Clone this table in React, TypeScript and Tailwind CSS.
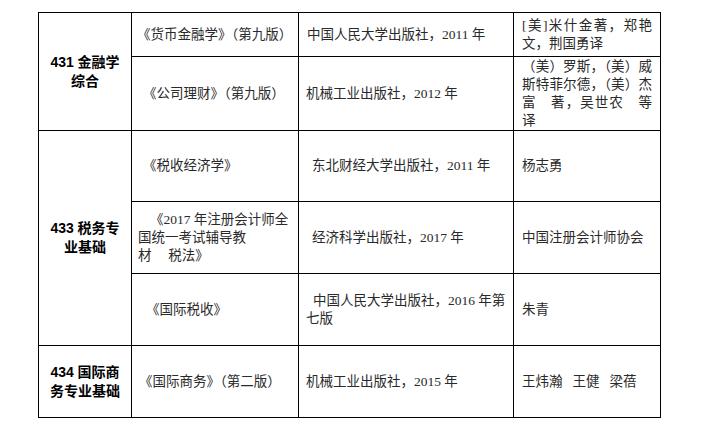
import React from "react";

const serif = "font-['Liberation_Serif','Noto_Sans_CJK_SC',serif]";
const cell = "border border-black align-middle p-0";

const JLine = ({ text }: { text: string }): JSX.Element => (
  <div className="text-justify [text-align-last:justify]">{text}</div>
);

const Subject = ({ lines }: { lines: string[] }): JSX.Element => (
  <div className="text-center font-['Liberation_Sans','Noto_Sans_CJK_SC',sans-serif] font-bold text-[14px] leading-[19px] text-black">
    {lines.map((l, i) => (
      <div key={i}>{l}</div>
    ))}
  </div>
);

const App = (): JSX.Element => {
  return (
    <div className="w-[715px] h-[423px] bg-white pt-[12px] pl-[38px] text-[#2a2a2a]">
      <table
        className={`border-collapse table-fixed w-[622px] text-[13.5px] leading-[18px] ${serif}`}
      >
        <colgroup>
          <col className="w-[93px]" />
          <col className="w-[167px]" />
          <col className="w-[215px]" />
          <col className="w-[147px]" />
        </colgroup>
        <tbody>
          <tr className="h-[44px]">
            <td rowSpan={2} className={cell}>
              <Subject lines={["431 金融学", "综合"]} />
            </td>
            <td className={`${cell} pl-[5px]`}>《货币金融学》（第九版）</td>
            <td className={`${cell} pl-[8px]`}>中国人民大学出版社，2011 年</td>
            <td className={`${cell} px-[8px]`}>
              <JLine text="[美]米什金著，郑艳" />
              <div>文，荆国勇译</div>
            </td>
          </tr>
          <tr className="h-[74px]">
            <td className={`${cell} pl-[11px]`}>《公司理财》（第九版）</td>
            <td className={`${cell} pl-[7px]`}>机械工业出版社，2012 年</td>
            <td className={`${cell} px-[8px]`}>
              <JLine text="（美）罗斯，（美）威" />
              <JLine text="斯特菲尔德，（美）杰" />
              <JLine text="富　著，吴世农　等" />
              <div>译</div>
            </td>
          </tr>
          <tr className="h-[71px]">
            <td rowSpan={3} className={cell}>
              <Subject lines={["433 税务专", "业基础"]} />
            </td>
            <td className={`${cell} pl-[11px]`}>《税收经济学》</td>
            <td className={`${cell} pl-[13px]`}>东北财经大学出版社，2011 年</td>
            <td className={`${cell} pl-[8px]`}>杨志勇</td>
          </tr>
          <tr className="h-[72px]">
            <td className={`${cell} pl-[6px]`}>
              <div className="pl-[12px]">《2017 年注册会计师全</div>
              <div>国统一考试辅导教</div>
              <div>材　 税法》</div>
            </td>
            <td className={`${cell} pl-[13px]`}>经济科学出版社，2017 年</td>
            <td className={`${cell} pl-[8px]`}>中国注册会计师协会</td>
          </tr>
          <tr className="h-[72px]">
            <td className={`${cell} pl-[14px]`}>《国际税收》</td>
            <td className={`${cell} pl-[7px]`}>
              <div className="pl-[7px]">中国人民大学出版社，2016 年第</div>
              <div>七版</div>
            </td>
            <td className={`${cell} pl-[8px]`}>朱青</td>
          </tr>
          <tr className="h-[72px]">
            <td className={cell}>
              <Subject lines={["434 国际商", "务专业基础"]} />
            </td>
            <td className={`${cell} pl-[7px]`}>《国际商务》（第二版）</td>
            <td className={`${cell} pl-[7px]`}>机械工业出版社，2015 年</td>
            <td className={`${cell} pl-[8px]`}>
              <span className="flex gap-[10px]">
                <span>王炜瀚</span>
                <span>王健</span>
                <span>梁蓓</span>
              </span>
            </td>
          </tr>
        </tbody>
      </table>
    </div>
  );
};

export default App;
